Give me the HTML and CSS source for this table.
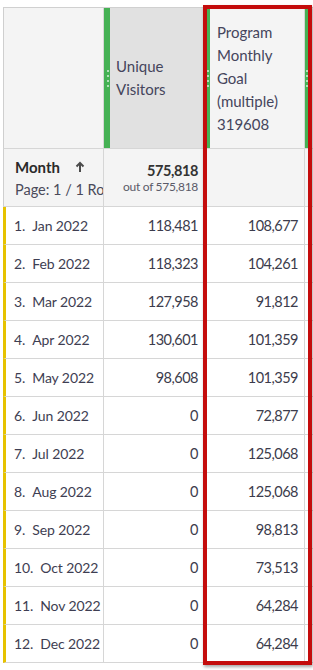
FILE: index.html
```html
<!DOCTYPE html>
<html lang="en">
<head>
<meta charset="utf-8">
<title>Freeform table</title>
<link rel="stylesheet" href="styles.css">
</head>
<body>
<div class="page">
  <div class="table">
    <div class="cell head dim-head"></div>
    <div class="cell head metric-head sorted">
      <div class="handle"><i></i><i></i><i></i><i></i></div>
      <div class="head-text">Unique<br>Visitors</div>
    </div>
    <div class="cell head metric-head">
      <div class="handle"><i></i><i></i><i></i><i></i></div>
      <div class="head-text">Program<br>Monthly<br>Goal<br>(multiple)<br>319608</div>
    </div>
    <div class="cell head metric-head cut">
      <div class="handle thin"><i></i><i></i><i></i><i></i></div>
    </div>

    <div class="cell sub dim-sub">
      <div class="sub-title"><b>Month</b><svg class="arrow" width="10" height="12" viewBox="0 0 10 12"><path d="M5 11V2M1.5 5.5L5 2l3.5 3.5" fill="none" stroke="#4b4b4b" stroke-width="2"/></svg></div>
      <div class="sub-page">Page: 1 / 1 Rows: 50</div>
    </div>
    <div class="cell sub total"><b>575,818</b><span>out of 575,818</span></div>
    <div class="cell sub"></div>
    <div class="cell sub cut"></div>

    <div class="cell dim"><span class="n">1.</span>Jan 2022</div><div class="cell num">118,481</div><div class="cell num">108,677</div><div class="cell cut"></div>
    <div class="cell dim"><span class="n">2.</span>Feb 2022</div><div class="cell num">118,323</div><div class="cell num">104,261</div><div class="cell cut"></div>
    <div class="cell dim"><span class="n">3.</span>Mar 2022</div><div class="cell num">127,958</div><div class="cell num">91,812</div><div class="cell cut"></div>
    <div class="cell dim"><span class="n">4.</span>Apr 2022</div><div class="cell num">130,601</div><div class="cell num">101,359</div><div class="cell cut"></div>
    <div class="cell dim"><span class="n">5.</span>May 2022</div><div class="cell num">98,608</div><div class="cell num">101,359</div><div class="cell cut"></div>
    <div class="cell dim"><span class="n">6.</span>Jun 2022</div><div class="cell num">0</div><div class="cell num">72,877</div><div class="cell cut"></div>
    <div class="cell dim"><span class="n">7.</span>Jul 2022</div><div class="cell num">0</div><div class="cell num">125,068</div><div class="cell cut"></div>
    <div class="cell dim"><span class="n">8.</span>Aug 2022</div><div class="cell num">0</div><div class="cell num">125,068</div><div class="cell cut"></div>
    <div class="cell dim"><span class="n">9.</span>Sep 2022</div><div class="cell num">0</div><div class="cell num">98,813</div><div class="cell cut"></div>
    <div class="cell dim"><span class="n">10.</span>Oct 2022</div><div class="cell num">0</div><div class="cell num">73,513</div><div class="cell cut"></div>
    <div class="cell dim"><span class="n">11.</span>Nov 2022</div><div class="cell num">0</div><div class="cell num">64,284</div><div class="cell cut"></div>
    <div class="cell dim"><span class="n">12.</span>Dec 2022</div><div class="cell num">0</div><div class="cell num">64,284</div><div class="cell cut"></div>
  </div>
  <div class="highlight"></div>
</div>
</body>
</html>
```
FILE: styles.css
```css
* { box-sizing: border-box; }
body {
  margin: 0;
  background: #fff;
  font-family: Lato, "Noto Sans", sans-serif;
  color: #404040;
}
.page {
  position: relative;
  padding: 7px 0 0 3px;
  height: 670px;
  overflow: hidden;
}
.table {
  display: grid;
  grid-template-columns: 101px 100px 101px 8px;
  grid-template-rows: 142px 58px repeat(12, 38px);
}
.cell {
  border-right: 1px solid #d6d6d6;
  border-bottom: 1px solid #d6d6d6;
  overflow: hidden;
  white-space: nowrap;
}
.cell.cut { border-right: none; }
.head {
  border-top: 1px solid #d0d0d0;
  background: #f4f4f4;
}
.dim-head, .dim-sub { border-left: 1px solid #cfcfcf; }
.metric-head {
  display: flex;
  align-items: stretch;
}
.metric-head.sorted { background: #e1e1e1; }
.handle {
  width: 6px;
  flex: none;
  background: #45b154;
  display: flex;
  flex-direction: column;
  justify-content: center;
  align-items: flex-end;
  gap: 3px;
  padding-right: 1px;
}
.handle.thin { width: 3px; padding-right: 0; align-items: center; }
.handle i {
  display: block;
  width: 2px;
  height: 2px;
  border-radius: 1px;
  background: #d9eedb;
}
.head-text {
  align-self: center;
  padding-left: 6px;
  font-size: 15px;
  line-height: 23px;
  color: #45455c;
}
.metric-head:not(.sorted) .head-text { padding-left: 7px; }
.sub { background: #f4f4f4; }
.dim-sub { padding: 6px 0 0 11px; }
.sub-title {
  display: flex;
  align-items: center;
  height: 23px;
  font-size: 15px;
  color: #2a2a2a;
}
.arrow { margin-left: 15px; }
.sub-page {
  font-size: 14.5px;
  line-height: 23px;
  color: #4a4a5a;
}
.total {
  display: flex;
  flex-direction: column;
  align-items: flex-end;
  padding: 13px 5px 0 0;
}
.total b {
  font-size: 14.5px;
  line-height: 18px;
  color: #333;
  letter-spacing: -0.4px;
}
.total span {
  font-size: 12px;
  line-height: 14px;
  color: #5a5a68;
  letter-spacing: -0.3px;
}
.dim {
  border-left: 3px solid #e6c200;
  padding-left: 8px;
  display: flex;
  align-items: center;
  font-size: 14px;
  letter-spacing: -0.1px;
  color: #3e3e52;
}
.dim .n { margin-right: 7px; }
.num {
  display: flex;
  align-items: center;
  justify-content: flex-end;
  padding-right: 5px;
  font-size: 14.5px;
  letter-spacing: -0.5px;
  color: #3c3c4c;
}
.num + .num { padding-right: 6px; }
.highlight {
  position: absolute;
  left: 203px;
  top: 5px;
  width: 109px;
  height: 660px;
  border: 4px solid #c40c0c;
  box-shadow: 1px 2px 3px rgba(0, 0, 0, 0.35);
}
```
